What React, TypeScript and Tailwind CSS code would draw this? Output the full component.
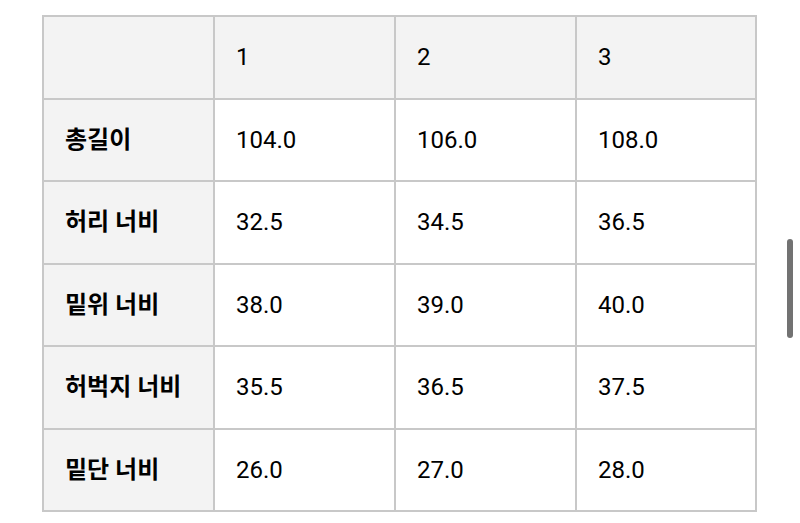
import React from 'react';

const header = ['', '1', '2', '3'];

const rows: { label: string; values: string[] }[] = [
  { label: '총길이', values: ['104.0', '106.0', '108.0'] },
  { label: '허리 너비', values: ['32.5', '34.5', '36.5'] },
  { label: '밑위 너비', values: ['38.0', '39.0', '40.0'] },
  { label: '허벅지 너비', values: ['35.5', '36.5', '37.5'] },
  { label: '밑단 너비', values: ['26.0', '27.0', '28.0'] },
];

const widths = ['w-[171px]', 'w-[181px]', 'w-[181px]', 'w-[180px]'];

export default function App() {
  return (
    <div className="relative w-[800px] h-[523px] overflow-hidden bg-white font-['Roboto','Noto_Sans_CJK_KR',sans-serif] text-black">
      <div className="pt-[15px] pl-[42px]">
        <table className="border-collapse table-fixed">
          <colgroup>
            {widths.map((w, i) => (
              <col key={i} className={w} />
            ))}
          </colgroup>
          <thead>
            <tr className="h-[82.5px] bg-[#f3f3f3]">
              {header.map((h, i) => (
                <th
                  key={i}
                  className="border-2 border-[#c8c8c8] pl-[21px] text-left align-middle text-[24px] font-normal"
                >
                  {h}
                </th>
              ))}
            </tr>
          </thead>
          <tbody>
            {rows.map((r) => (
              <tr key={r.label} className="h-[82.5px]">
                <td className="border-2 border-[#c8c8c8] bg-[#f3f3f3] pl-[21px] align-middle text-[24px] font-bold">
                  {r.label}
                </td>
                {r.values.map((v, i) => (
                  <td
                    key={i}
                    className="border-2 border-[#c8c8c8] bg-white pl-[21px] align-middle text-[24px]"
                  >
                    {v}
                  </td>
                ))}
              </tr>
            ))}
          </tbody>
        </table>
      </div>

      {/* scroll indicator */}
      <div className="absolute left-[787px] top-[239px] h-[99px] w-[6px] rounded-full bg-[#727272]" />
    </div>
  );
}
